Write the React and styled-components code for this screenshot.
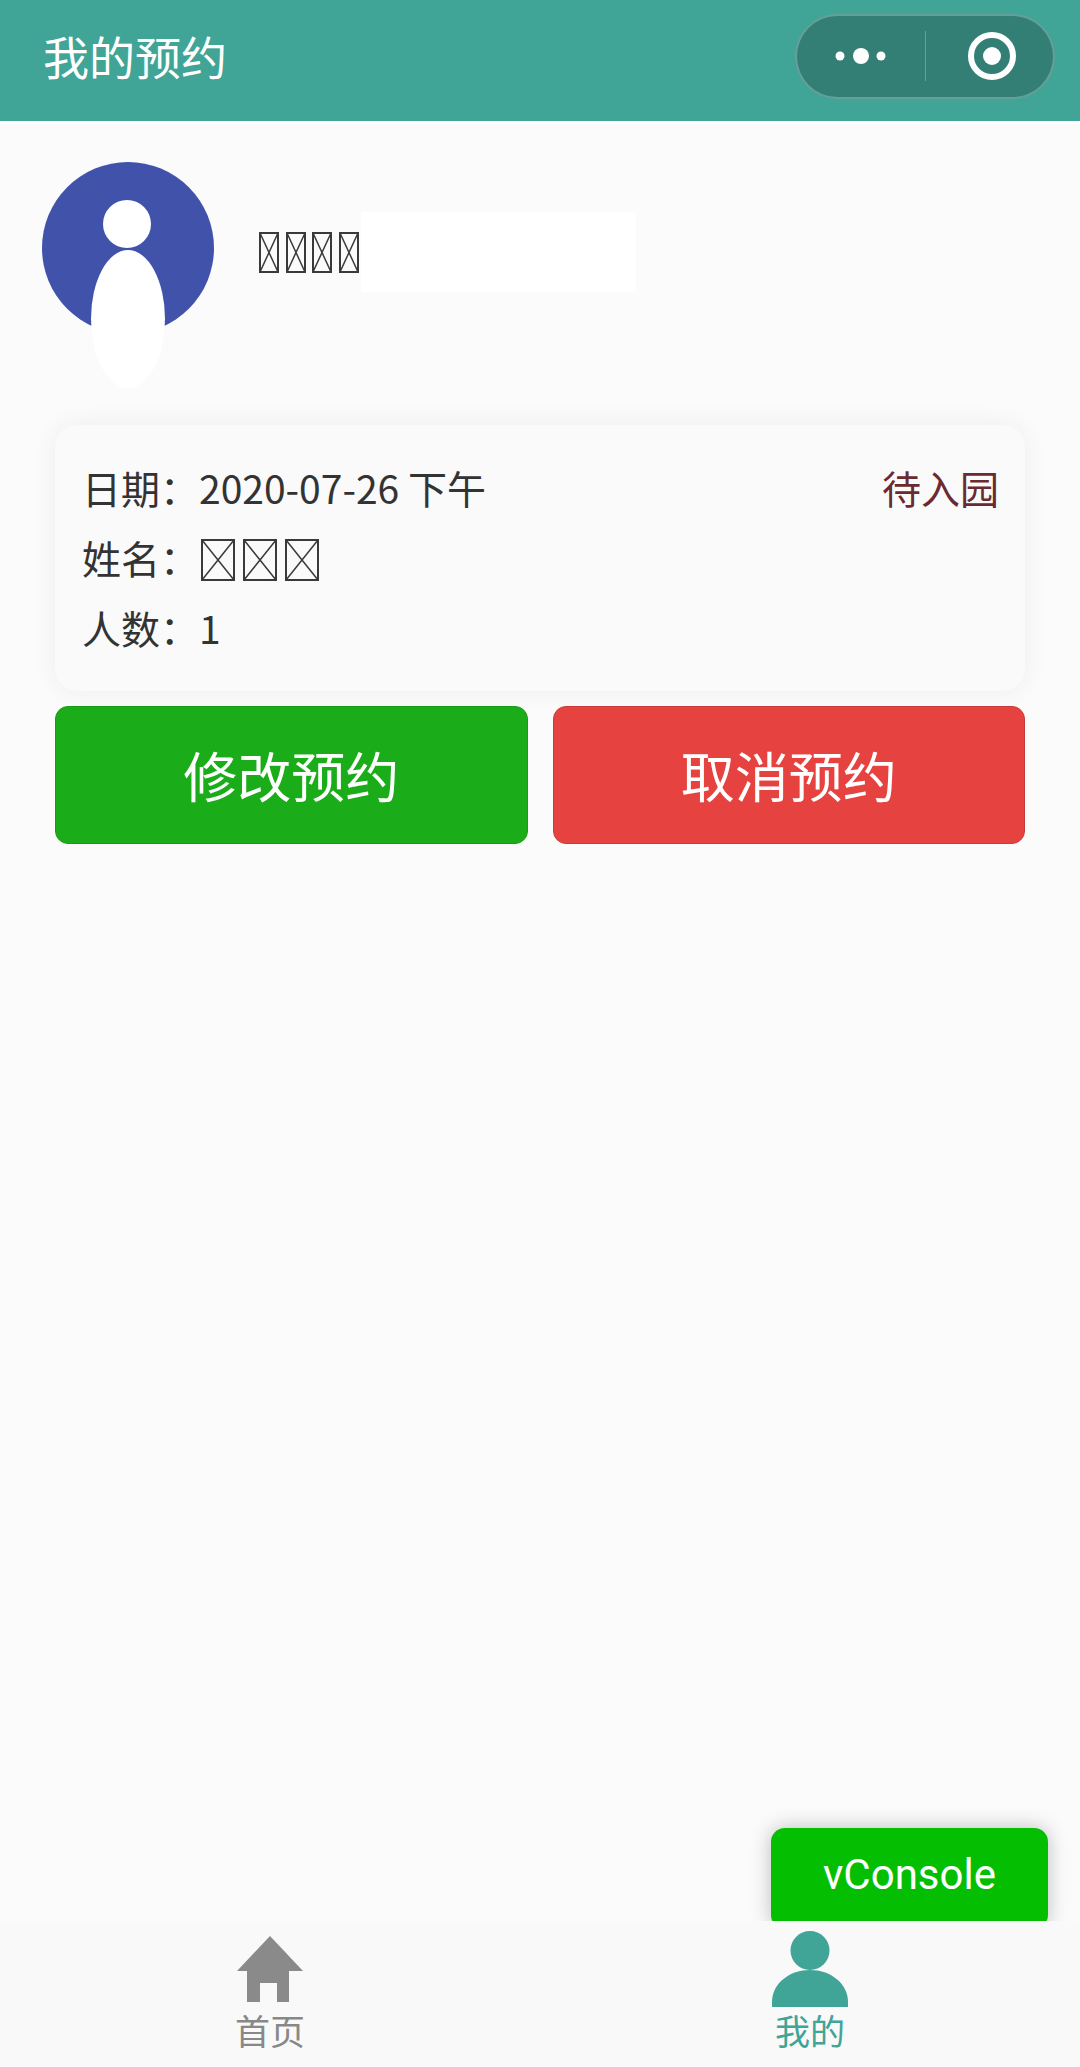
import React from 'react';
import styled, { createGlobalStyle } from 'styled-components';

const GlobalStyle = createGlobalStyle`
  html, body {
    margin: 0;
    padding: 0;
    background: #fbfbfb;
  }
  * {
    box-sizing: border-box;
  }
`;

const Tofu = ({ width, height }) => (
  <TofuBox width={width} height={height} viewBox={`0 0 ${width} ${height}`}>
    <rect x='1' y='1' width={width - 2} height={height - 2} fill='none' stroke='#3a3a3a' strokeWidth='2' />
    <path d={`M1 1L${width - 1} ${height - 1}M${width - 1} 1L1 ${height - 1}`} stroke='#3a3a3a' strokeWidth='1.5' />
  </TofuBox>
);

const App = () => {
  return (
    <Page>
      <GlobalStyle />
      <Header>
        <Title>我的预约</Title>
        <Capsule>
          <CapsulePart>
            <svg width='64' height='20' viewBox='0 0 64 20'>
              <circle cx='11' cy='10' r='4.5' fill='#fff' />
              <circle cx='32' cy='10' r='8' fill='#fff' />
              <circle cx='52' cy='10' r='4.5' fill='#fff' />
            </svg>
          </CapsulePart>
          <CapsuleDivider />
          <CapsulePart>
            <RingIcon width='48' height='48' viewBox='0 0 48 48'>
              <circle cx='24' cy='24' r='21' fill='none' stroke='#fff' strokeWidth='6' />
              <circle cx='24' cy='24' r='9' fill='#fff' />
            </RingIcon>
          </CapsulePart>
        </Capsule>
      </Header>

      <Main>
        <Profile>
          <svg width='172' height='226' viewBox='0 0 172 226'>
            <circle cx='86' cy='86' r='86' fill='#4152ab' />
            <circle cx='85' cy='62' r='24' fill='#fff' />
            <ellipse cx='86' cy='157' rx='37' ry='69' fill='#fff' />
          </svg>
          <NameRow>
            <NameTofus>
              <Tofu width={20} height={41} />
              <Tofu width={20} height={41} />
              <Tofu width={20} height={41} />
              <Tofu width={20} height={41} />
            </NameTofus>
            <NamePatch />
          </NameRow>
        </Profile>

        <Card>
          <CardRow>
            <Label>日期：</Label>
            <span>2020-07-26 下午</span>
            <Status>待入园</Status>
          </CardRow>
          <CardRow>
            <Label>姓名：</Label>
            <TofuGroup>
              <Tofu width={34} height={42} />
              <Tofu width={34} height={42} />
              <Tofu width={34} height={42} />
            </TofuGroup>
          </CardRow>
          <CardRow>
            <Label>人数：</Label>
            <span>1</span>
          </CardRow>
        </Card>

        <Actions>
          <ActionBtn color='#1aad19' edge='#179b16'>修改预约</ActionBtn>
          <ActionBtn color='#e64340' edge='#c93b38'>取消预约</ActionBtn>
        </Actions>

        <ConsoleBtn>vConsole</ConsoleBtn>
      </Main>

      <TabBar>
        <TabItem>
          <TabIcon>
            <HomeIcon width='68' height='67' viewBox='0 0 68 67'>
              <path d='M34 0L67 35H53V66H41V47H24V66H11V35H1Z' fill='#8a8a8a' />
            </HomeIcon>
          </TabIcon>
          <TabLabel>首页</TabLabel>
        </TabItem>
        <TabItem>
          <TabIcon>
            <svg width='76' height='76' viewBox='0 0 76 76'>
              <circle cx='38' cy='19.5' r='19.5' fill='#40a497' />
              <path d='M0 76V71C0 52 18 39 38 39C58 39 76 52 76 71V76Z' fill='#40a497' />
            </svg>
          </TabIcon>
          <TabLabel active>我的</TabLabel>
        </TabItem>
      </TabBar>
    </Page>
  );
};

export default App;

const Page = styled.div`
  display: flex;
  flex-direction: column;
  width: 1080px;
  height: 2067px;
  overflow: hidden;
  background: #fbfbfb;
  font-family: 'Noto Sans CJK SC', 'Noto Sans', sans-serif;
`;

const Header = styled.header`
  display: flex;
  align-items: center;
  justify-content: space-between;
  flex: none;
  height: 121px;
  padding: 0 25px 9px 43px;
  background: #40a497;
  box-shadow: 0 3px 0 #fff;
`;

const Title = styled.h1`
  margin: 0 0 3px;
  font-size: 46px;
  font-weight: 400;
  line-height: 60px;
  color: #fff;
`;

const Capsule = styled.div`
  display: flex;
  align-items: center;
  width: 260px;
  height: 85px;
  border: 2px solid rgba(255, 255, 255, 0.25);
  border-radius: 43px;
  background: #337f75;
`;

const CapsulePart = styled.div`
  display: flex;
  align-items: center;
  justify-content: center;
  flex: 1;
`;

const CapsuleDivider = styled.div`
  flex: none;
  width: 1px;
  height: 50px;
  background: rgba(255, 255, 255, 0.25);
`;

const RingIcon = styled.svg`
  margin-left: 5px;
`;

const Main = styled.main`
  position: relative;
  flex: 1;
  padding: 41px 55px 0;
`;

const Profile = styled.section`
  display: flex;
  align-items: flex-start;
  gap: 45px;
  margin-left: -13px;
`;

const NameRow = styled.div`
  display: flex;
  align-items: center;
  margin-top: 50px;
`;

const NameTofus = styled.div`
  display: flex;
  gap: 6.67px;
  margin-right: 2px;
`;

const TofuBox = styled.svg`
  display: block;
  flex: none;
`;

const NamePatch = styled.div`
  width: 275px;
  height: 80px;
  background: #fff;
`;

const Card = styled.section`
  margin-top: 37px;
  padding: 30px 26px 26px 27px;
  border-radius: 22px;
  background: #fafafa;
  box-shadow: 0 0 26px rgba(0, 0, 0, 0.06);
`;

const CardRow = styled.div`
  display: flex;
  align-items: center;
  height: 70px;
  padding-bottom: 7px;
  font-size: 39px;
  color: #333;
`;

const Label = styled.span`
  flex: none;
  width: 117px;
`;

const Status = styled.span`
  margin-left: auto;
  color: #6b2a30;
`;

const TofuGroup = styled.div`
  display: flex;
  gap: 8px;
  margin: 7px 0 0 2px;
`;

const Actions = styled.div`
  display: grid;
  grid-template-columns: 1fr 1fr;
  gap: 25px;
  margin-top: 15px;
`;

const ActionBtn = styled.button`
  height: 138px;
  padding: 0 0 2px;
  border: 1px solid ${({ edge }) => edge};
  border-radius: 13px;
  background: ${({ color }) => color};
  font-family: inherit;
  font-size: 54px;
  color: #fff;
`;

const ConsoleBtn = styled.div`
  position: absolute;
  right: 32px;
  bottom: -8px;
  display: flex;
  align-items: center;
  justify-content: center;
  width: 277px;
  height: 101px;
  padding-bottom: 8px;
  border-radius: 14px;
  background: #04be02;
  box-shadow: 0 0 20px rgba(0, 0, 0, 0.25);
  font-family: 'Roboto', sans-serif;
  font-size: 42px;
  color: #fff;
`;

const TabBar = styled.nav`
  position: relative;
  z-index: 1;
  display: grid;
  grid-template-columns: 1fr 1fr;
  flex: none;
  height: 146px;
  background: #f9f9f9;
`;

const TabItem = styled.div`
  display: flex;
  flex-direction: column;
  align-items: center;
  padding-top: 10px;
`;

const TabIcon = styled.div`
  display: flex;
  align-items: flex-end;
  height: 76px;
`;

const HomeIcon = styled.svg`
  margin-bottom: 4px;
`;

const TabLabel = styled.span`
  font-size: 35px;
  line-height: 45px;
  color: ${({ active }) => (active ? '#40a497' : '#888')};
`;
